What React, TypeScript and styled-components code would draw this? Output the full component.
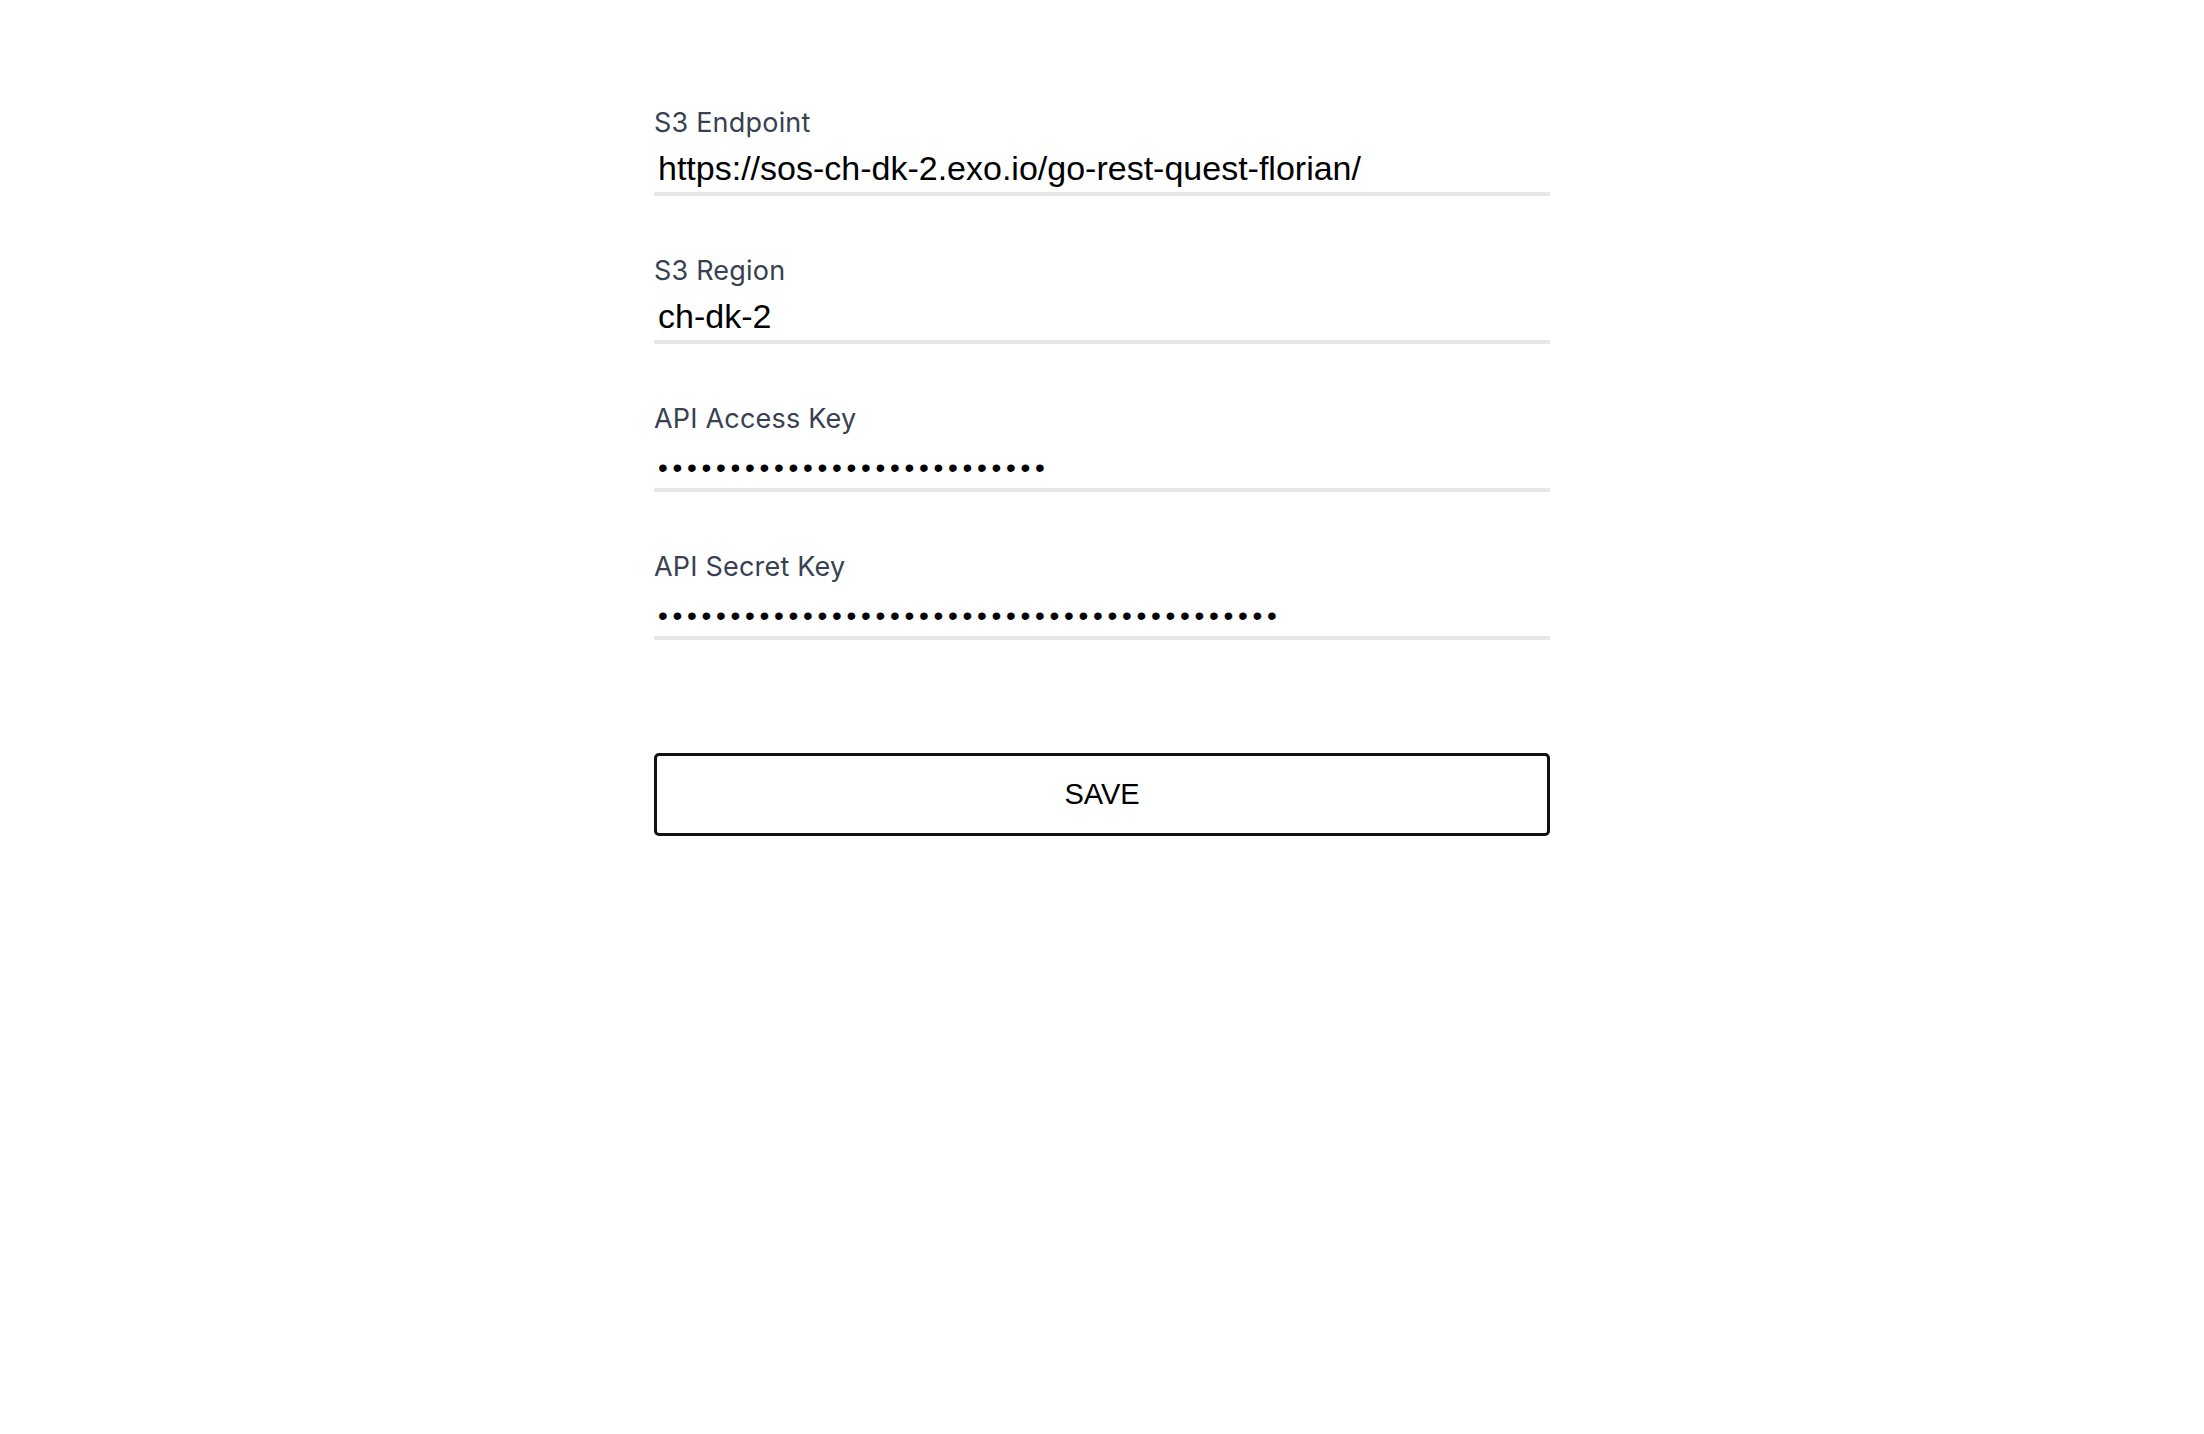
import React from "react";
import styled, { createGlobalStyle } from "styled-components";

const GlobalStyle = createGlobalStyle`
  html, body {
    margin: 0;
    padding: 0;
    background: #ffffff;
  }
  body {
    font-family: Inter, "Noto Sans", sans-serif;
  }
`;

const Page = styled.div`
  min-height: 1434px;
  padding-top: 107px;
  box-sizing: border-box;
`;

const Form = styled.form`
  width: 896px;
  margin: 0 auto;
  display: flex;
  flex-direction: column;
  gap: 59px;
`;

const Field = styled.label`
  display: flex;
  flex-direction: column;
  gap: 9px;
`;

const Label = styled.span`
  font-family: Inter, "Noto Sans", sans-serif;
  font-size: 27px;
  line-height: 31px;
  letter-spacing: 0.2px;
  color: #374151;
`;

const Input = styled.input<{ $masked?: boolean }>`
  box-sizing: border-box;
  width: 100%;
  height: 49px;
  padding: ${(p) => (p.$masked ? "6px 4px 2px" : "1px 4px 4px")};
  border: none;
  border-bottom: 4px solid #e5e7eb;
  outline: none;
  background: transparent;
  font-family: "Liberation Sans", Arial, sans-serif;
  font-size: ${(p) => (p.$masked ? "28px" : "34px")};
  line-height: 40px;
  color: #000000;
  letter-spacing: ${(p) => (p.$masked ? "4.7px" : "normal")};
`;

const SaveButton = styled.button`
  margin-top: 54px;
  box-sizing: border-box;
  width: 100%;
  height: 83px;
  border: 3px solid #111111;
  border-radius: 5px;
  background: #ffffff;
  color: #000000;
  font-family: "Liberation Sans", Arial, sans-serif;
  font-size: 29px;
  cursor: pointer;
`;

const fields = [
  { label: "S3 Endpoint", value: "https://sos-ch-dk-2.exo.io/go-rest-quest-florian/", masked: false },
  { label: "S3 Region", value: "ch-dk-2", masked: false },
  { label: "API Access Key", value: "EXO0123456789abcdef01234567", masked: true },
  { label: "API Secret Key", value: "abcdefghijklmnopqrstuvwxyz0123456789ABCDEFG", masked: true },
];

const App = () => {
  return (
    <Page>
      <GlobalStyle />
      <Form onSubmit={(e) => e.preventDefault()}>
        {fields.map((f) => (
          <Field key={f.label}>
            <Label>{f.label}</Label>
            <Input
              type={f.masked ? "password" : "text"}
              defaultValue={f.value}
              $masked={f.masked}
            />
          </Field>
        ))}
        <SaveButton type="submit">SAVE</SaveButton>
      </Form>
    </Page>
  );
};

export default App;
